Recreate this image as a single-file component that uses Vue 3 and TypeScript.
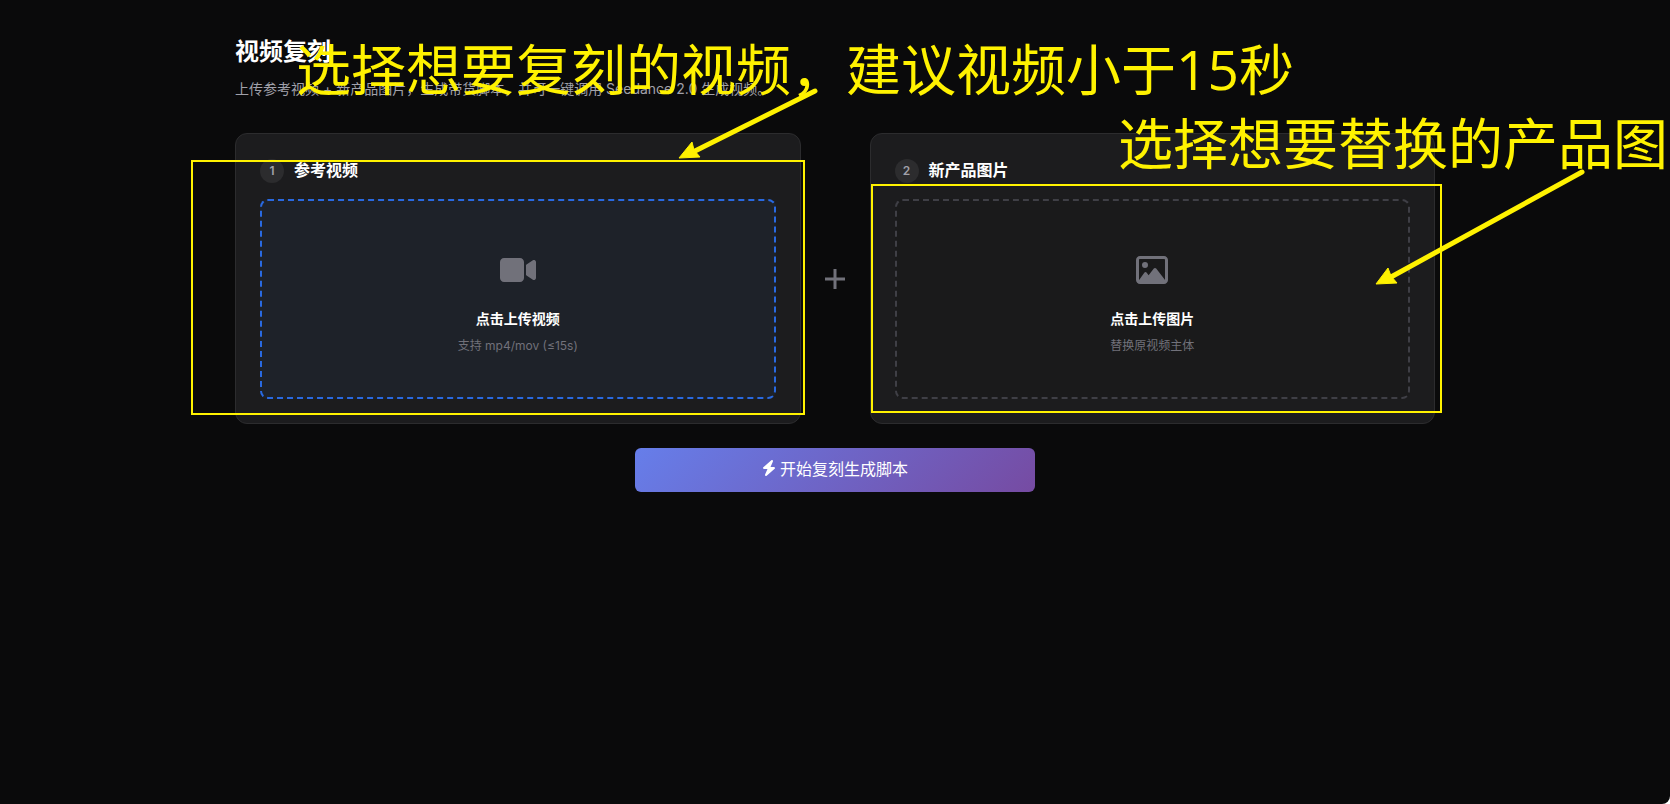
<script setup lang="ts">
import { ref } from 'vue'

interface UploadStep {
  step: number
  title: string
  action: string
  hint: string
}

const videoStep: UploadStep = {
  step: 1,
  title: '参考视频',
  action: '点击上传视频',
  hint: '支持 mp4/mov (≤15s)',
}

const imageStep: UploadStep = {
  step: 2,
  title: '新产品图片',
  action: '点击上传图片',
  hint: '替换原视频主体',
}

const started = ref(false)
</script>

<template>
  <div class="page">
    <main class="container">
      <header class="page-header">
        <h1>视频复刻</h1>
        <p>上传参考视频 + 新产品图片，生成带货脚本，并可一键调用 Seedance 2.0 生成视频。</p>
      </header>

      <div class="steps">
        <section class="card" aria-labelledby="step-video">
          <div class="card-head">
            <span class="badge">{{ videoStep.step }}</span>
            <h2 id="step-video">{{ videoStep.title }}</h2>
          </div>
          <button type="button" class="dropzone active">
            <svg class="zone-icon" viewBox="0 0 576 512" width="36" height="32" aria-hidden="true">
              <path d="M0 128C0 92.7 28.7 64 64 64H320c35.3 0 64 28.7 64 64V384c0 35.3-28.7 64-64 64H64c-35.3 0-64-28.7-64-64V128zM559.1 99.8c10.4 5.6 16.9 16.4 16.9 28.2V384c0 11.8-6.5 22.6-16.9 28.2s-23 5-32.9-1.6l-96-64L416 337.1V320 192 174.9l14.2-9.5 96-64c9.8-6.5 22.4-7.2 32.9-1.6z" />
            </svg>
            <span class="zone-title">{{ videoStep.action }}</span>
            <span class="zone-hint">{{ videoStep.hint }}</span>
          </button>
        </section>

        <svg class="plus" viewBox="0 0 21 24" width="21" height="24" aria-hidden="true">
          <path d="M0 12H20M10 2V22" />
        </svg>

        <section class="card" aria-labelledby="step-image">
          <div class="card-head">
            <span class="badge">{{ imageStep.step }}</span>
            <h2 id="step-image">{{ imageStep.title }}</h2>
          </div>
          <button type="button" class="dropzone">
            <svg class="zone-icon" viewBox="0 0 512 512" width="32" height="32" aria-hidden="true">
              <path d="M448 80c8.8 0 16 7.2 16 16V415.8l-5-6.5-136-176c-4.5-5.9-11.6-9.3-19-9.3s-14.4 3.4-19 9.3L202 340.7l-30.5-42.7C167 291.7 159.8 288 152 288s-15 3.7-19.5 10.1l-80 112L48 416.3l0-.3V96c0-8.8 7.2-16 16-16H448zM64 32C28.7 32 0 60.7 0 96V416c0 35.3 28.7 64 64 64H448c35.3 0 64-28.7 64-64V96c0-35.3-28.7-64-64-64H64zm80 192a48 48 0 1 0 0-96 48 48 0 1 0 0 96z" />
            </svg>
            <span class="zone-title">{{ imageStep.action }}</span>
            <span class="zone-hint">{{ imageStep.hint }}</span>
          </button>
        </section>
      </div>

      <button type="button" class="submit" @click="started = true">
        <svg viewBox="0 0 448 512" width="14" height="16" aria-hidden="true">
          <path d="M349.4 44.6c5.9-13.7 1.5-29.7-10.6-38.5s-28.6-8-39.9 1.8l-256 224c-10 8.8-13.6 22.9-8.9 35.3S50.7 288 64 288H175.5L98.6 467.4c-5.9 13.7-1.5 29.7 10.6 38.5s28.6 8 39.9-1.8l256-224c10-8.8 13.6-22.9 8.9-35.3s-16.6-20.7-30-20.7H272.5L349.4 44.6z" />
        </svg>
        <span>开始复刻生成脚本</span>
      </button>

      <div class="guide">
        <p class="note note-video">选择想要复刻的视频，建议视频小于15秒</p>
        <p class="note note-image">选择想要替换的产品图</p>
        <div class="frame frame-video"></div>
        <div class="frame frame-image"></div>
        <svg class="arrow arrow-video" viewBox="0 0 144 76" width="144" height="76" aria-hidden="true">
          <line x1="139" y1="6" x2="17" y2="67" />
          <polygon points="3,73 16,57 18,65 24,72" />
        </svg>
        <svg class="arrow arrow-image" viewBox="0 0 214 120" width="214" height="120" aria-hidden="true">
          <line x1="209" y1="5" x2="18" y2="110" />
          <polygon points="3,117 15,101 18,109 24,116" />
        </svg>
      </div>
    </main>
  </div>
</template>

<style>
html,
body {
  margin: 0;
  background: #fff;
}
</style>

<style scoped>
.page {
  box-sizing: border-box;
  min-height: 100vh;
  padding: 32px 24px;
  overflow: hidden;
  color: #fff;
  background: #0a0a0b;
  border-bottom-right-radius: 8px;
  font-family: Inter, 'Noto Sans CJK SC', sans-serif;
}

.container {
  position: relative;
  max-width: 1200px;
  margin: 0 auto;
}

.page-header {
  margin-bottom: 32px;
}

h1 {
  margin: 0 0 5px;
  font-size: 24px;
  font-weight: 700;
  line-height: 40px;
}

.page-header p {
  margin: 0;
  color: #a1a1aa;
  font-size: 14px;
  line-height: 24px;
}

.steps {
  display: grid;
  grid-template-columns: 1fr auto 1fr;
  align-items: center;
  gap: 24px;
}

.card {
  padding: 24px;
  background: #1c1c1e;
  border: 1px solid #2c2c2e;
  border-radius: 12px;
}

.card-head {
  display: flex;
  align-items: center;
  gap: 10px;
  margin-bottom: 16px;
}

.badge {
  display: flex;
  align-items: center;
  justify-content: center;
  width: 24px;
  height: 24px;
  color: #a1a1aa;
  background: #2c2c2e;
  border-radius: 50%;
  font-size: 12px;
  font-weight: 600;
}

h2 {
  margin: 0;
  font-size: 16px;
  font-weight: 700;
  line-height: 25px;
}

.dropzone {
  display: flex;
  flex-direction: column;
  align-items: center;
  justify-content: center;
  box-sizing: border-box;
  width: 100%;
  min-height: 200px;
  padding: 36px 24px 24px;
  color: #fff;
  background: #1a1a1b;
  border: 2px dashed #3f3f46;
  border-radius: 8px;
  font-family: inherit;
  cursor: pointer;
}

.dropzone.active {
  background: #1e2229;
  border-color: #2969e0;
}

.zone-icon {
  margin-bottom: 22px;
  fill: #71717a;
}

.zone-title {
  margin-bottom: 6px;
  font-size: 14px;
  font-weight: 700;
  line-height: 22px;
}

.zone-hint {
  color: #71717a;
  font-size: 12px;
  line-height: 20px;
}

.plus {
  fill: none;
  stroke: #71717a;
  stroke-width: 3;
}

.submit {
  display: flex;
  align-items: center;
  justify-content: center;
  gap: 4px;
  width: 400px;
  max-width: 100%;
  height: 44px;
  margin: 24px auto 0;
  padding: 0 16px 4px;
  color: #fff;
  background: linear-gradient(135deg, #667eea 0%, #764ba2 100%);
  border: 0;
  border-radius: 6px;
  font-family: inherit;
  font-size: 16px;
  cursor: pointer;
}

.submit svg {
  fill: #fff;
}

/* Tutorial marks drawn over the form */
.guide {
  position: absolute;
  inset: 0;
  pointer-events: none;
}

.note {
  position: absolute;
  margin: 0;
  color: #fff200;
  font-family: 'Open Sans', 'Noto Sans CJK SC', sans-serif;
  font-size: 55px;
  line-height: 72px;
  white-space: nowrap;
}

.note-video {
  top: 1px;
  left: 61px;
}

.note-image {
  top: 75px;
  left: 883px;
}

.frame {
  position: absolute;
  box-sizing: border-box;
  border: 2px solid #fff200;
}

.frame-video {
  top: 128px;
  left: -44px;
  width: 614px;
  height: 255px;
}

.frame-image {
  top: 152px;
  left: 636px;
  width: 571px;
  height: 229px;
}

.arrow {
  position: absolute;
  fill: #fff200;
  stroke: #fff200;
}

.arrow line {
  stroke-width: 5;
  stroke-linecap: round;
}

.arrow polygon {
  stroke-width: 1;
}

.arrow-video {
  top: 53px;
  left: 441px;
}

.arrow-image {
  top: 135px;
  left: 1138px;
}
</style>
